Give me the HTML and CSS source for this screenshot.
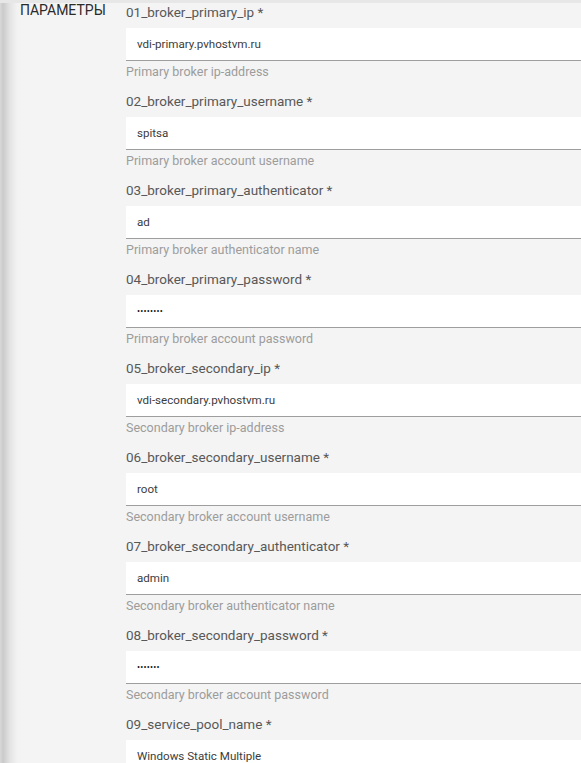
FILE: index.html
```html
<!DOCTYPE html>
<html lang="ru">
<head>
<meta charset="utf-8">
<title>Параметры</title>
<link rel="stylesheet" href="styles.css">
</head>
<body>
<div class="topbar"></div>
<div class="section">
  <div class="section-title">ПАРАМЕТРЫ</div>
  <div class="fields">
    <div class="field">
      <div class="label">01_broker_primary_ip *</div>
      <div class="input">vdi-primary.pvhostvm.ru</div>
      <div class="hint">Primary broker ip-address</div>
    </div>
    <div class="field">
      <div class="label">02_broker_primary_username *</div>
      <div class="input">spitsa</div>
      <div class="hint">Primary broker account username</div>
    </div>
    <div class="field">
      <div class="label">03_broker_primary_authenticator *</div>
      <div class="input">ad</div>
      <div class="hint">Primary broker authenticator name</div>
    </div>
    <div class="field">
      <div class="label">04_broker_primary_password *</div>
      <div class="input pwd">&bull;&bull;&bull;&bull;&bull;&bull;&bull;&bull;</div>
      <div class="hint">Primary broker account password</div>
    </div>
    <div class="field">
      <div class="label">05_broker_secondary_ip *</div>
      <div class="input">vdi-secondary.pvhostvm.ru</div>
      <div class="hint">Secondary broker ip-address</div>
    </div>
    <div class="field">
      <div class="label">06_broker_secondary_username *</div>
      <div class="input">root</div>
      <div class="hint">Secondary broker account username</div>
    </div>
    <div class="field">
      <div class="label">07_broker_secondary_authenticator *</div>
      <div class="input">admin</div>
      <div class="hint">Secondary broker authenticator name</div>
    </div>
    <div class="field">
      <div class="label">08_broker_secondary_password *</div>
      <div class="input pwd">&bull;&bull;&bull;&bull;&bull;&bull;&bull;</div>
      <div class="hint">Secondary broker account password</div>
    </div>
    <div class="field">
      <div class="label">09_service_pool_name *</div>
      <div class="input">Windows Static Multiple</div>
      <div class="hint">Service pool name</div>
    </div>
  </div>
</div>
</body>
</html>
```
FILE: styles.css
```css
html, body {
  margin: 0;
  padding: 0;
  overflow: hidden;
}
body {
  font-family: Roboto, "Liberation Sans", sans-serif;
  background: linear-gradient(to right, #d9d9d9 0, #cacaca 3px, #e4e4e4 10px, #f2f2f2 17px, #f4f4f4 22px);
  height: 763px;
}
.topbar {
  height: 3px;
  background: #e7e7e7;
}
.section {
  display: grid;
  grid-template-columns: 126px 1fr;
}
.section-title {
  padding-left: 20px;
  font-size: 14px;
  line-height: 18px;
  color: #2a2a2a;
  margin-top: -2px;
}
.field {
  display: flex;
  flex-direction: column;
  margin-bottom: 11px;
}
.label {
  font-size: 13.5px;
  line-height: 18px;
  color: #585858;
  margin-bottom: 7px;
}
.input {
  height: 32px;
  background: #fff;
  border-bottom: 1px solid #9e9e9e;
  padding-left: 11px;
  font-size: 11.6px;
  line-height: 32px;
  color: #3c3c3c;
}
.input.pwd {
  font-size: 9px;
  color: #111;
  letter-spacing: 0.2px;
}
.hint {
  margin-top: 2px;
  font-size: 12.5px;
  line-height: 18px;
  color: #9c9c9c;
}
```
